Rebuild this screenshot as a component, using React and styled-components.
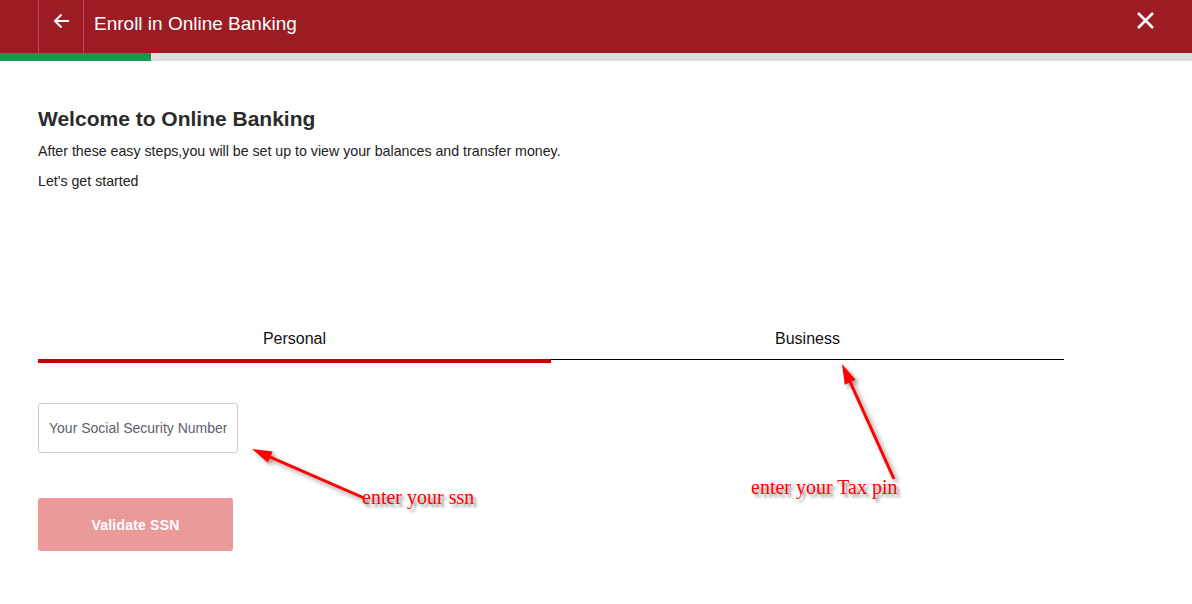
import React from "react";
import styled, { createGlobalStyle } from "styled-components";

const Global = createGlobalStyle`
  * { box-sizing: border-box; }
  html, body { margin: 0; padding: 0; background: #fff; }
  body { font-family: "Liberation Sans", Arial, sans-serif; color: #333; }
`;

const Page = styled.div`
  position: relative;
  width: 1192px;
  min-height: 604px;
  overflow: hidden;
`;

const Header = styled.header`
  height: 53px;
  background: #9d1c24;
  display: flex;
  align-items: stretch;
  padding-left: 38px;
  padding-right: 37px;
`;

const BackButton = styled.button`
  width: 46px;
  border: none;
  border-left: 1px solid rgba(255, 255, 255, 0.22);
  border-right: 1px solid rgba(255, 255, 255, 0.22);
  background: transparent;
  display: flex;
  align-items: center;
  justify-content: center;
  padding: 0 0 12px 0;
  cursor: pointer;
`;

const Title = styled.h1`
  margin: 0;
  padding-left: 10px;
  flex: 1;
  display: flex;
  align-items: center;
  font-size: 19px;
  font-weight: normal;
  color: #fff;
  padding-bottom: 5px;
`;

const CloseButton = styled.button`
  border: none;
  background: transparent;
  padding: 0 0 12px 0;
  display: flex;
  align-items: center;
  cursor: pointer;
`;

const Progress = styled.div`
  height: 8px;
  background: #dddddd;
  display: flex;
`;

const ProgressFill = styled.div`
  background: #14984a;
  height: 100%;
`;

const Main = styled.main`
  padding: 0 38px;
`;

const Heading = styled.h2`
  margin: 46px 0 10px;
  font-size: 21px;
  line-height: 24px;
  font-weight: bold;
  color: #2b2b2b;
`;

const Text = styled.p`
  margin: 0 0 10px;
  font-size: 14.2px;
  line-height: 20px;
  color: #222;
`;

const Tabs = styled.div`
  display: flex;
  align-items: flex-start;
  width: 1026px;
  margin-top: 128px;
`;

const Tab = styled.div`
  flex: 1;
  text-align: center;
  font-size: 16px;
  line-height: 20px;
  color: #111;
  padding: 10px 0 10px;
  border-bottom: ${(p) => (p.$active ? "4px solid #cc0000" : "1px solid #000")};
  cursor: pointer;
`;

const Input = styled.input`
  display: block;
  margin-top: 40px;
  width: 200px;
  height: 50px;
  border: 1px solid #cccccc;
  border-radius: 3px;
  padding: 0 10px;
  font-family: "Liberation Sans", Arial, sans-serif;
  font-size: 14px;
  color: #333;
  &::placeholder { color: #5e5e6c; opacity: 1; }
`;

const Button = styled.button`
  display: block;
  margin-top: 45px;
  width: 195px;
  height: 53px;
  border: none;
  border-radius: 3px;
  background: #eb9a9a;
  color: #fff;
  font-family: "Liberation Sans", Arial, sans-serif;
  font-weight: bold;
  font-size: 14px;
  letter-spacing: 0.2px;
`;

const Overlay = styled.svg`
  position: absolute;
  left: 0;
  top: 0;
  pointer-events: none;
`;

const Note = styled.span`
  position: absolute;
  font-family: "Liberation Serif", "Times New Roman", serif;
  font-size: 20px;
  line-height: 20px;
  color: #ff0000;
  text-shadow: 3px 3px 3px rgba(0, 0, 0, 0.45);
  white-space: nowrap;
  pointer-events: none;
`;

function Arrow({ x1, y1, x2, y2 }) {
  const ang = Math.atan2(y2 - y1, x2 - x1);
  const len = 20;
  const w = 6;
  const bx = x2 - Math.cos(ang) * len;
  const by = y2 - Math.sin(ang) * len;
  const px = -Math.sin(ang) * w;
  const py = Math.cos(ang) * w;
  const pts = `${x2},${y2} ${bx + px},${by + py} ${bx - px},${by - py}`;
  return (
    <g filter="url(#sh)">
      <line x1={x1} y1={y1} x2={bx} y2={by} stroke="#ff0000" strokeWidth="3" />
      <polygon points={pts} fill="#ff0000" />
    </g>
  );
}

export default function App() {
  return (
    <Page>
      <Global />
      <Header>
        <BackButton aria-label="Back">
          <svg width="17" height="16" viewBox="0 0 17 16">
            <path d="M16 8H2M8.5 1.5L2 8l6.5 6.5" fill="none" stroke="#fff" strokeWidth="2" />
          </svg>
        </BackButton>
        <Title>Enroll in Online Banking</Title>
        <CloseButton aria-label="Close">
          <svg width="19" height="19" viewBox="0 0 19 19">
            <path d="M2 2l15 15M17 2L2 17" stroke="#fff" strokeWidth="2.6" />
          </svg>
        </CloseButton>
      </Header>
      <Progress>
        <ProgressFill style={{ width: "151px" }} />
      </Progress>
      <Main>
        <Heading>Welcome to Online Banking</Heading>
        <Text>After these easy steps,you will be set up to view your balances and transfer money.</Text>
        <Text>Let's get started</Text>
        <Tabs>
          <Tab $active>Personal</Tab>
          <Tab>Business</Tab>
        </Tabs>
        <Input placeholder="Your Social Security Number" />
        <Button>Validate SSN</Button>
      </Main>
      <Overlay width="1192" height="604" viewBox="0 0 1192 604">
        <defs>
          <filter id="sh" x="-20%" y="-20%" width="140%" height="140%">
            <feDropShadow dx="3" dy="3" stdDeviation="2" floodColor="#000" floodOpacity="0.4" />
          </filter>
        </defs>
        <Arrow x1={364} y1={498} x2={252} y2={449} />
        <Arrow x1={894} y1={479} x2={842} y2={364} />
      </Overlay>
      <Note style={{ left: 362, top: 487 }}>enter your ssn</Note>
      <Note style={{ left: 751, top: 477 }}>enter your Tax pin</Note>
    </Page>
  );
}
